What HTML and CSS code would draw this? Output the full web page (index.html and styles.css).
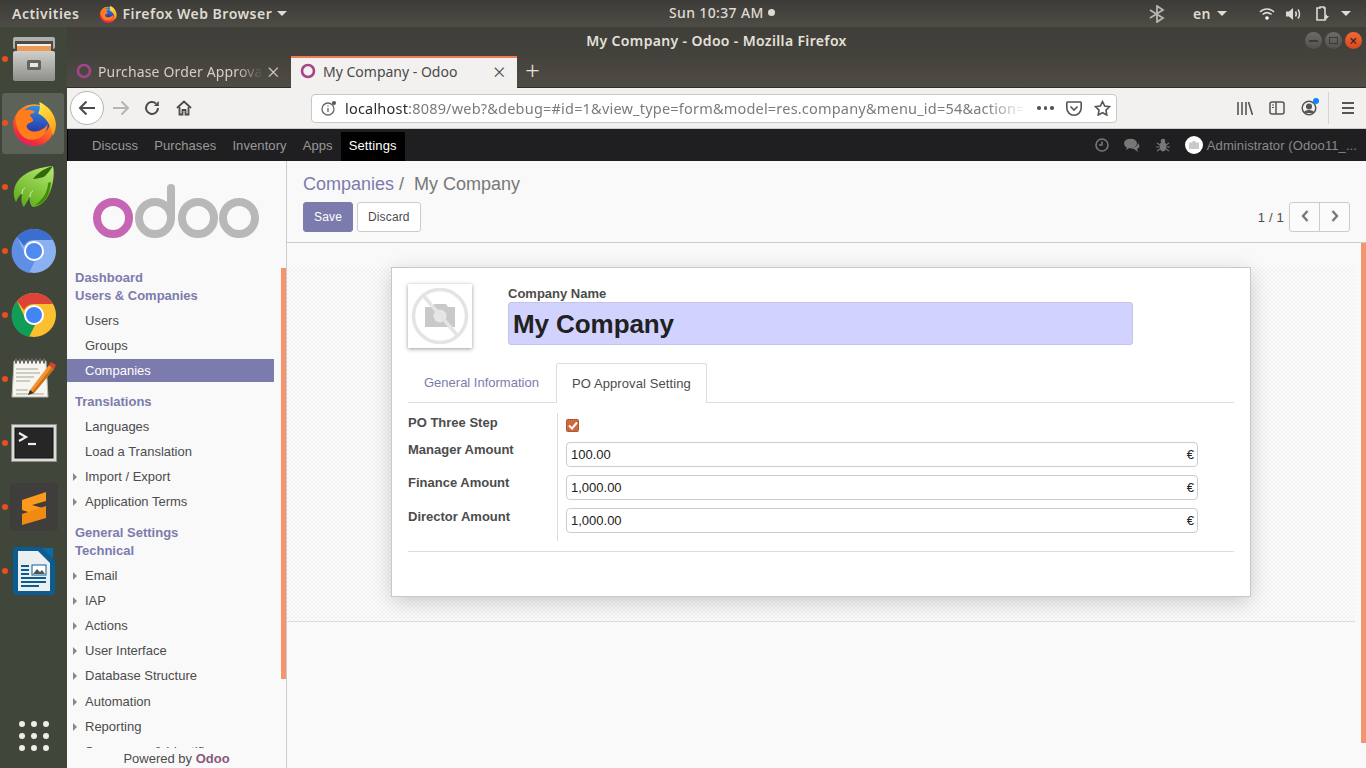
FILE: index.html
```html
<!DOCTYPE html>
<html lang="en">
<head>
    <meta charset="UTF-8">
    <title>My Company - Odoo - Mozilla Firefox</title>
    <link rel="stylesheet" href="styles.css">
</head>
<body>
    <svg class="defs" width="0" height="0">
        <defs>
            <linearGradient id="ff-base" x1="0.8" y1="0.1" x2="0.3" y2="1">
                <stop offset="0" stop-color="#ffb21f"/>
                <stop offset="0.5" stop-color="#ff6a1f"/>
                <stop offset="0.85" stop-color="#ee2a3c"/>
                <stop offset="1" stop-color="#d8207a"/>
            </linearGradient>
            <linearGradient id="ff-globe" x1="0.6" y1="0" x2="0.5" y2="1">
                <stop offset="0" stop-color="#2f8fe8"/>
                <stop offset="1" stop-color="#2b2a9c"/>
            </linearGradient>
            <linearGradient id="ff-flame" x1="0.3" y1="0" x2="0.6" y2="1">
                <stop offset="0" stop-color="#ffe94a"/>
                <stop offset="1" stop-color="#ff9d14"/>
            </linearGradient>
            <linearGradient id="files-body" x1="0" y1="0" x2="0" y2="1">
                <stop offset="0" stop-color="#cfcfcb"/>
                <stop offset="1" stop-color="#8e8e8a"/>
            </linearGradient>
            <linearGradient id="leaf" x1="0.8" y1="0" x2="0.3" y2="1">
                <stop offset="0" stop-color="#b4e46e"/>
                <stop offset="1" stop-color="#5cae18"/>
            </linearGradient>
            <symbol id="firefox" viewBox="0 0 44 44">
                <circle cx="22" cy="24" r="20" fill="url(#ff-base)"/>
                <circle cx="23" cy="20" r="14.500" fill="url(#ff-globe)"/>
                <path d="M5 15c3-5 6-8 10-9l-2 4c3-1 7-1 10 1-1 2-3 2-5 3 1 3 4 4 3 6-2 2-6 2-6 5 0 4 7 7 13 4 4-2 6-4 7-6 0 8-6 15-15 15C10 38 3 26 5 15z" fill="#ff7d1a"/>
                <path d="M27 2c7 3 15 10 16 21 0 4-1 8-3 11-2-10-6-17-14-21 2-4 2-8 1-11z" fill="url(#ff-flame)"/>
            </symbol>
            <symbol id="odoo-fav" viewBox="0 0 16 16">
                <circle cx="8" cy="8" r="6" fill="none" stroke="#a24689" stroke-width="2.6"/>
            </symbol>
        </defs>
    </svg>

    <header class="topbar">
        <span class="topbar-item activities">Activities</span>
        <span class="topbar-item app-menu">
            <svg width="18" height="18"><use href="#firefox"/></svg>
            Firefox Web Browser <i class="caret"></i>
        </span>
        <span class="clock">Sun 10:37 AM <i class="rec-dot"></i></span>
        <div class="tray">
            <svg class="tray-bt" width="16" height="18" viewBox="0 0 16 18" fill="none" stroke="#b8b6b0" stroke-width="1.8">
                <path d="M1 5l13 8-6 4V1l6 4L1 13"/>
            </svg>
            <span class="tray-lang">en <i class="caret"></i></span>
            <svg class="tray-wifi" width="16" height="14" viewBox="0 0 16 14" fill="none" stroke="#dcdad5" stroke-width="1.6">
                <path d="M1 5c4-4 10-4 14 0M3.500 7.500c3-2.500 6-2.500 9 0"/>
                <circle cx="8" cy="11" r="1.800" fill="#fff" stroke="none"/>
            </svg>
            <svg class="tray-vol" width="16" height="14" viewBox="0 0 16 14">
                <path d="M0 4.500h3L7 1v12L3 9.500H0z" fill="#dcdad5"/>
                <path d="M9.500 4.500c1 1.500 1 3.500 0 5M12 2.500c2 2.500 2 6.500 0 9" fill="none" stroke="#dcdad5" stroke-width="1.500"/>
            </svg>
            <svg class="tray-bat" width="14" height="16" viewBox="0 0 14 16">
                <path d="M3 2h1V1h4v1h1v12H1V2z" fill="none" stroke="#dcdad5" stroke-width="1.600"/>
                <path d="M11 8l-3 4h2l-1 3 4-5h-2z" fill="#dcdad5"/>
            </svg>
            <i class="caret"></i>
        </div>
    </header>

    <div class="desktop">
        <nav class="dock">
            <div class="dock-slot"><i class="dock-dot"></i>
                <svg width="44" height="46" viewBox="0 0 44 46">
                    <rect x="1" y="1" width="42" height="12" rx="2" fill="#b0b0ac"/>
                    <rect x="3" y="5" width="38" height="12" fill="#4d4b47"/>
                    <rect x="5" y="8" width="34" height="2" fill="#f3f0e8"/>
                    <rect x="5" y="10" width="34" height="6" fill="#ee9a57"/>
                    <rect x="1" y="15" width="42" height="30" rx="2" fill="url(#files-body)"/>
                    <rect x="15" y="24" width="14" height="10" rx="1.500" fill="#66645f"/>
                    <rect x="18" y="27" width="8" height="4" fill="#e8e8e4"/>
                </svg>
            </div>
            <div class="dock-slot active"><i class="dock-dot"></i>
                <svg width="46" height="46"><use href="#firefox"/></svg>
            </div>
            <div class="dock-slot"><i class="dock-dot"></i>
                <svg width="42" height="42" viewBox="0 0 42 42">
                    <path d="M40 0C28 1 10 5 3 18c-3 6-3 13 0 18 2-4 4-8 6-8-1 4-1 10 2 13 2-4 4-7 6-10-1 4 0 8 3 10C32 40 38 27 40 15c1-6 1-10 0-15z" fill="url(#leaf)"/>
                    <path d="M40 0C33 2 26 5 20 13c6-1 11-1 13-4 3-3 5-6 7-9z" fill="#2f6a0b"/>
                    <path d="M35 17c0 8-5 17-13 22 8 1 15-9 16-23z" fill="#3f8d05"/>
                    <path d="M9 28c0-4 2-6 3-6M17 31c0-4 2-6 3-6" stroke="#e2f5c0" fill="none"/>
                </svg>
            </div>
            <div class="dock-slot"><i class="dock-dot"></i>
                <svg width="46" height="46" viewBox="0 0 46 46">
                    <circle cx="23" cy="23" r="22" fill="#8ab2f2"/>
                    <path d="M23 1a22 22 0 0 1 19 11H23a11 11 0 0 0-10 6L6 9a22 22 0 0 1 17-8z" fill="#3a6fd0"/>
                    <path d="M6 9l9 19a10 10 0 0 0 9 5l-6 12A22 22 0 0 1 6 9z" fill="#5e8fe4"/>
                    <circle cx="23" cy="23" r="10" fill="#fff"/>
                    <circle cx="23" cy="23" r="8" fill="#4f8af0"/>
                </svg>
            </div>
            <div class="dock-slot"><i class="dock-dot"></i>
                <svg width="46" height="46" viewBox="0 0 46 46">
                    <circle cx="23" cy="23" r="22" fill="#fbc02d"/>
                    <path d="M23 1a22 22 0 0 1 19 11H23a11 11 0 0 0-10 6L6 9a22 22 0 0 1 17-8z" fill="#db4437"/>
                    <path d="M6 9l9 19a10 10 0 0 0 9 5l-6 12A22 22 0 0 1 6 9z" fill="#0f9d58"/>
                    <circle cx="23" cy="23" r="10" fill="#fff"/>
                    <circle cx="23" cy="23" r="8" fill="#4285f4"/>
                </svg>
            </div>
            <div class="dock-slot"><i class="dock-dot"></i>
                <svg width="46" height="42" viewBox="0 0 46 42">
                    <path d="M3 3h32l2 36H1z" fill="#f6f5ef" stroke="#b5b3a8"/>
                    <path d="M4 3h30" stroke="#666" stroke-width="5" stroke-dasharray="2 2"/>
                    <path d="M5 11h22M5 15h24M5 19h18M5 23h14M5 32h12M5 36h28" stroke="#a5a398"/>
                    <path d="M19 32L38 7l5 4-20 24-6 2z" fill="#f3932b"/>
                    <path d="M22 33L41 9l2 2-20 24z" fill="#c9701a"/>
                    <path d="M38 7l2-3 5 3-2 4z" fill="#d8442e"/>
                    <path d="M19 32l-2 5 6-2z" fill="#333"/>
                </svg>
            </div>
            <div class="dock-slot"><i class="dock-dot"></i>
                <svg width="46" height="38" viewBox="0 0 46 38">
                    <rect x="0.500" y="0.500" width="45" height="37" fill="#dadad6" stroke="#8f8f8b"/>
                    <rect x="4" y="4" width="38" height="30" fill="#262626" stroke="#111"/>
                    <path d="M8 9l7 4-7 4" fill="none" stroke="#eee" stroke-width="2.200"/>
                    <path d="M17 20h8" stroke="#eee" stroke-width="2.200"/>
                </svg>
            </div>
            <div class="dock-slot"><i class="dock-dot"></i>
                <svg width="48" height="48" viewBox="0 0 48 48">
                    <rect width="48" height="48" rx="4" fill="#3f3e3c"/>
                    <path d="M36 9L12 17v10l24 8v-9l-14-4 14-4z" fill="#fb9a1c"/>
                    <path d="M12 31l24-8v12l-24 7z" fill="#f08a12"/>
                </svg>
            </div>
            <div class="dock-slot"><i class="dock-dot"></i>
                <svg width="42" height="48" viewBox="0 0 42 48">
                    <path d="M3 0h25l14 14v31a3 3 0 0 1-3 3H3a3 3 0 0 1-3-3V3a3 3 0 0 1 3-3z" fill="#0b5d8f"/>
                    <path d="M5 4h20l12 12v28H5z" fill="#eceff0"/>
                    <path d="M29 1h11v11z" fill="#0b6aa8"/>
                    <path d="M8 19h8M8 23h8M8 27h8M8 31h25M8 35h25M8 39h18" stroke="#0b5d8f" stroke-width="2"/>
                    <rect x="19" y="18" width="14" height="10" fill="#fff" stroke="#0b5d8f"/>
                    <path d="M20 27l4-5 3 3 2-2 3 4z" fill="#555"/>
                </svg>
            </div>
            <div class="dock-grid">
                <i></i><i></i><i></i><i></i><i></i><i></i><i></i><i></i><i></i>
            </div>
        </nav>

        <div class="window">
            <div class="titlebar">
                <span class="title-text">My Company - Odoo - Mozilla Firefox</span>
                <div class="win-btns">
                    <span class="win-btn"><i class="win-min"></i></span>
                    <span class="win-btn"><i class="win-max"></i></span>
                    <span class="win-btn close">×</span>
                </div>
            </div>

            <div class="tabstrip">
                <div class="tab">
                    <svg width="16" height="16"><use href="#odoo-fav"/></svg>
                    <span class="tab-label fade">Purchase Order Approval</span>
                    <span class="tab-x">×</span>
                </div>
                <div class="tab current">
                    <svg width="16" height="16"><use href="#odoo-fav"/></svg>
                    <span class="tab-label">My Company - Odoo</span>
                    <span class="tab-x">×</span>
                </div>
                <span class="tab-new">+</span>
            </div>

            <div class="navbar">
                <span class="nav-back">
                    <svg width="18" height="16" viewBox="0 0 18 16" fill="none" stroke="#4a4a4a" stroke-width="2"><path d="M17 8H2M8.500 1.500L2 8l6.500 6.500"/></svg>
                </span>
                <svg class="nav-fwd" width="18" height="16" viewBox="0 0 18 16" fill="none" stroke="#b5b5b3" stroke-width="2"><path d="M1 8h15M9.500 1.500L16 8l-6.500 6.500"/></svg>
                <svg class="nav-reload" width="16" height="16" viewBox="0 0 16 16" fill="none" stroke="#4a4a4a" stroke-width="2"><path d="M14 8a6 6 0 1 1-2-4.500"/><path d="M14.800 1v5h-5z" fill="#4a4a4a" stroke="none"/></svg>
                <svg class="nav-home" width="16" height="16" viewBox="0 0 16 16" fill="none" stroke="#4a4a4a" stroke-width="1.800"><path d="M1 8l7-6.500L15 8"/><path d="M3.500 7v7.500h3V10h3v4.500h3V7"/></svg>

                <div class="urlbar">
                    <svg class="url-info" width="16" height="16" viewBox="0 0 16 16" fill="none" stroke="#666" stroke-width="1.300">
                        <circle cx="7" cy="9" r="6"/><path d="M7 8v4M7 5.500v1"/><circle cx="13" cy="3" r="2" fill="#555" stroke="none"/>
                    </svg>
                    <span class="url-text"><b>localhost</b>:8089/web?&amp;debug=#id=1&amp;view_type=form&amp;model=res.company&amp;menu_id=54&amp;action=</span>
                    <span class="url-dots"><i></i><i></i><i></i></span>
                    <svg class="url-pocket" width="16" height="15" viewBox="0 0 16 15" fill="none" stroke="#555" stroke-width="1.600">
                        <path d="M1.500 1h13a.7.7 0 0 1 .7.7V7a7.200 7.200 0 0 1-14.400 0V1.700a.7.7 0 0 1 .7-.7z"/><path d="M4.500 5.500L8 9l3.500-3.500"/>
                    </svg>
                    <svg class="url-star" width="17" height="16" viewBox="0 0 17 16" fill="none" stroke="#555" stroke-width="1.600">
                        <path d="M8.500 1.500l2.200 4.500 4.800.7-3.500 3.400.8 4.900-4.300-2.300L4.200 15l.8-4.900L1.500 6.700l4.800-.7z"/>
                    </svg>
                </div>

                <svg class="nav-lib" width="16" height="14" viewBox="0 0 16 14" stroke="#555" stroke-width="1.600"><path d="M1 1v13M5 1v13M9 1v13M11.500 1l4 13"/></svg>
                <svg class="nav-side" width="16" height="14" viewBox="0 0 16 14" fill="none" stroke="#555" stroke-width="1.500"><rect x="1" y="1" width="14" height="12" rx="2"/><path d="M7 1v12"/><path d="M3 4h2M3 6.500h2" stroke-width="1.200"/></svg>
                <span class="nav-account">
                    <svg width="16" height="16" viewBox="0 0 16 16" fill="none" stroke="#555" stroke-width="1.500"><circle cx="8" cy="8" r="6.800"/><circle cx="8" cy="6.500" r="2.300" fill="#555"/><path d="M3.500 13c1-3 8-3 9 0" fill="#555"/></svg>
                    <i class="account-dot"></i>
                </span>
                <i class="nav-sep"></i>
                <span class="nav-menu"><i></i><i></i><i></i></span>
            </div>

            <div class="odoo-nav">
                <ul class="odoo-apps">
                    <li>Discuss</li>
                    <li>Purchases</li>
                    <li>Inventory</li>
                    <li>Apps</li>
                    <li class="active">Settings</li>
                </ul>
                <div class="odoo-user">
                    <svg class="sys-clock" width="14" height="14" viewBox="0 0 14 14" fill="none" stroke="#777" stroke-width="1.600"><circle cx="7" cy="7" r="6"/><path d="M7 3.500V7H4"/></svg>
                    <svg class="sys-chat" width="16" height="14" viewBox="0 0 16 14" fill="#777"><ellipse cx="6.500" cy="5.500" rx="6.500" ry="4.800"/><path d="M3 8l-1 4 4-2.500zM14 5c2 2 2 5-1 6l1 3-4-3c-2 0-3-1-3-1 3 0 7-2 7-5z"/></svg>
                    <svg class="sys-bug" width="14" height="14" viewBox="0 0 14 14" fill="#777"><ellipse cx="7" cy="8.500" rx="3.500" ry="5"/><circle cx="7" cy="3" r="2.300"/><path d="M1 5l3 2M13 5l-3 2M0 9h3M14 9h-3M1 13l3-2M13 13l-3-2" stroke="#777" stroke-width="1.200"/></svg>
                    <span class="avatar">
                        <svg width="10" height="8" viewBox="0 0 10 8" fill="#c9c9c9"><path d="M0 1.500h3L4 0h2l1 1.500h3V8H0z"/></svg>
                    </span>
                    <span class="user-name">Administrator (Odoo11_...</span>
                </div>
            </div>

            <div class="odoo-main">
                <aside class="sidebar">
                    <svg class="logo" width="170" height="60" viewBox="0 0 170 60" fill="none" stroke-width="8">
                        <circle cx="20" cy="37" r="16" stroke="#c565b4"/>
                        <circle cx="62" cy="37" r="16" stroke="#b8b8b8"/>
                        <path d="M78 37V7" stroke="#b8b8b8" stroke-linecap="round"/>
                        <circle cx="105" cy="37" r="16" stroke="#b8b8b8"/>
                        <circle cx="146" cy="37" r="16" stroke="#b8b8b8"/>
                    </svg>
                    <div class="menu">
                        <div class="menu-head">Dashboard</div>
                        <div class="menu-head">Users &amp; Companies</div>
                        <div class="menu-item tight">Users</div>
                        <div class="menu-item">Groups</div>
                        <div class="menu-item active">Companies</div>
                        <div class="menu-head spaced">Translations</div>
                        <div class="menu-item tight">Languages</div>
                        <div class="menu-item">Load a Translation</div>
                        <div class="menu-item sub">Import / Export</div>
                        <div class="menu-item sub">Application Terms</div>
                        <div class="menu-head spaced">General Settings</div>
                        <div class="menu-head">Technical</div>
                        <div class="menu-item sub">Email</div>
                        <div class="menu-item sub">IAP</div>
                        <div class="menu-item sub">Actions</div>
                        <div class="menu-item sub">User Interface</div>
                        <div class="menu-item sub">Database Structure</div>
                        <div class="menu-item sub">Automation</div>
                        <div class="menu-item sub">Reporting</div>
                        <div class="menu-item sub">Sequences &amp; Identifiers</div>
                    </div>
                    <div class="powered">Powered by <b>Odoo</b></div>
                    <i class="side-scroll"></i>
                </aside>

                <main class="content">
                    <div class="control-panel">
                        <div class="breadcrumb"><a>Companies</a><span class="crumb-sep">/</span>My Company</div>
                        <div class="cp-row">
                            <div class="cp-buttons">
                                <button class="btn primary">Save</button>
                                <button class="btn">Discard</button>
                            </div>
                            <div class="pager">
                                <span class="pager-value">1 / 1</span>
                                <div class="pager-btns">
                                    <button class="pager-btn">
                                        <svg width="8" height="12" viewBox="0 0 8 12" fill="none" stroke="#777" stroke-width="2.400"><path d="M6.500 1L2 6l4.500 5"/></svg>
                                    </button>
                                    <button class="pager-btn">
                                        <svg width="8" height="12" viewBox="0 0 8 12" fill="none" stroke="#777" stroke-width="2.400"><path d="M1.500 1L6 6l-4.500 5"/></svg>
                                    </button>
                                </div>
                            </div>
                        </div>
                    </div>

                    <div class="form-area">
                        <div class="sheet-bg">
                            <div class="sheet">
                                <div class="sheet-head">
                                    <div class="company-img">
                                        <svg width="58" height="58" viewBox="0 0 58 58" fill="none">
                                            <path d="M14 20h7l2-3h12l2 3h7v20H14z" fill="#c9c9c9"/>
                                            <circle cx="29" cy="29" r="6.500" fill="#e6e6e6"/>
                                            <circle cx="29" cy="29" r="26.500" stroke="#e4e4e4" stroke-width="3.500"/>
                                            <path d="M11 7l35 41" stroke="#e4e4e4" stroke-width="3.500"/>
                                        </svg>
                                    </div>
                                    <div class="title-field">
                                        <label class="name-label">Company Name</label>
                                        <div class="name-input">My Company</div>
                                    </div>
                                </div>

                                <div class="form-tabs">
                                    <span class="form-tab">General Information</span>
                                    <span class="form-tab current">PO Approval Setting</span>
                                </div>

                                <div class="form-grid">
                                    <div class="form-labels">
                                        <label class="lbl-step">PO Three Step</label>
                                        <label class="lbl-manager">Manager Amount</label>
                                        <label class="lbl-finance">Finance Amount</label>
                                        <label class="lbl-director">Director Amount</label>
                                    </div>
                                    <div class="form-values">
                                        <span class="check">
                                            <svg width="10" height="9" viewBox="0 0 10 9" fill="none" stroke="#fff" stroke-width="2"><path d="M1 4.500l3 3 5-6"/></svg>
                                        </span>
                                        <div class="amount"><span>100.00</span><span>€</span></div>
                                        <div class="amount"><span>1,000.00</span><span>€</span></div>
                                        <div class="amount"><span>1,000.00</span><span>€</span></div>
                                    </div>
                                </div>
                                <div class="sheet-foot"></div>
                            </div>
                        </div>
                        <i class="main-scroll"></i>
                    </div>
                </main>
            </div>
        </div>
    </div>
</body>
</html>
```

FILE: styles.css
```css
* {
    box-sizing: border-box;
}
html, body {
    margin: 0;
    height: 100%;
    overflow: hidden;
}
body {
    width: 1366px;
    height: 768px;
    font-family: "Liberation Sans", Arial, sans-serif;
    font-size: 13px;
    color: #4c4c4c;
    background: #f9f9f9;
}
i {
    font-style: normal;
}
.defs {
    position: absolute;
}

/* ubuntu top bar */
.topbar {
    height: 27px;
    display: flex;
    align-items: center;
    position: relative;
    background: linear-gradient(#3c3b37, #4f4c46);
    font-family: "Noto Sans", sans-serif;
    font-size: 14px;
    font-weight: 600;
    letter-spacing: 0.5px;
    color: #dfdbd2;
}
.activities {
    margin-left: 12px;
}
.app-menu {
    margin-left: 20px;
    display: flex;
    align-items: center;
    gap: 5px;
}
.caret {
    display: inline-block;
    width: 0;
    height: 0;
    border-left: 5px solid transparent;
    border-right: 5px solid transparent;
    border-top: 5px solid #dfdbd2;
}
.clock {
    position: absolute;
    left: 669px;
    top: 3px;
    display: flex;
    align-items: center;
    gap: 4px;
    font-weight: 500;
    letter-spacing: 0.35px;
}
.rec-dot {
    width: 7px;
    height: 7px;
    border-radius: 50%;
    background: #dfdbd2;
}
.tray {
    margin-left: auto;
    display: flex;
    align-items: center;
    padding-right: 15px;
}
.tray-bt {
    margin-right: 28px;
}
.tray-lang {
    margin-right: 32px;
    display: flex;
    align-items: center;
    gap: 6px;
}
.tray-wifi {
    margin-right: 11px;
}
.tray-vol {
    margin-right: 14px;
}
.tray-bat {
    margin-right: 11px;
}

/* dock */
.desktop {
    display: flex;
    height: 741px;
}
.dock {
    width: 67px;
    flex: none;
    display: flex;
    flex-direction: column;
    background: #40463a;
}
.dock-slot {
    height: 64px;
    flex: none;
    position: relative;
    display: flex;
    align-items: center;
    justify-content: center;
}
.dock-slot svg {
    position: relative;
}
.dock-slot.active::before {
    content: "";
    position: absolute;
    left: 2px;
    right: 3px;
    top: 2px;
    bottom: 1px;
    border-radius: 3px;
    background: #5c6257;
}
.dock-dot {
    position: absolute;
    left: 2px;
    top: 29px;
    width: 6px;
    height: 6px;
    border-radius: 50%;
    background: #e8501f;
}
.dock-grid {
    margin: auto auto 17px;
    display: grid;
    grid-template-columns: repeat(3, 6px);
    gap: 6px;
}
.dock-grid i {
    width: 6px;
    height: 6px;
    border-radius: 50%;
    background: #ecece8;
}

/* firefox window */
.window {
    flex: 1;
    min-width: 0;
    display: flex;
    flex-direction: column;
}
.titlebar {
    height: 29px;
    flex: none;
    display: flex;
    align-items: center;
    justify-content: center;
    position: relative;
    padding-bottom: 2px;
    background: linear-gradient(#3f3e39, #44423c);
    font-family: "Noto Sans", sans-serif;
    font-size: 14px;
    font-weight: 600;
    letter-spacing: 0.35px;
    color: #e4e1da;
}
.win-btns {
    position: absolute;
    right: 4px;
    top: 5px;
    display: flex;
    gap: 3px;
}
.win-btn {
    width: 17px;
    height: 17px;
    border-radius: 50%;
    background: linear-gradient(#6d6b65, #53514b);
    display: flex;
    align-items: center;
    justify-content: center;
    color: #3a2a20;
    font-size: 14px;
    line-height: 1;
}
.win-btn.close {
    background: linear-gradient(#f0693a, #d9481c);
}
.win-min {
    width: 9px;
    height: 2px;
    background: #3c3b37;
}
.win-max {
    width: 9px;
    height: 7px;
    border: 1.5px solid #3c3b37;
}

.tabstrip {
    height: 32px;
    flex: none;
    display: flex;
    align-items: stretch;
    background: linear-gradient(#44423c, #4f4c45);
    border-bottom: 1px solid #2e2d2a;
    font-family: "Noto Sans", sans-serif;
    font-size: 14px;
}
.tab {
    width: 224px;
    display: flex;
    align-items: center;
    padding: 0 0 1px 9px;
    color: #d3d0c8;
}
.tab svg {
    flex: none;
}
.tab-label {
    margin-left: 6px;
    width: 165px;
    overflow: hidden;
    white-space: nowrap;
}
.tab-label.fade {
    letter-spacing: 0.15px;
    -webkit-mask-image: linear-gradient(to right, #000 84%, transparent);
    mask-image: linear-gradient(to right, #000 84%, transparent);
}
.tab-x {
    margin-left: 4px;
    font-size: 22px;
    font-weight: 300;
    line-height: 1;
}
.tab.current {
    width: 226px;
    background: #f2f1f0;
    border-top: 2px solid #ec7d54;
    margin-bottom: -1px;
    color: #4a4a48;
    padding: 0 0 4px 9px;
}
.tab.current .tab-label {
    width: 168px;
    margin-left: 7px;
}
.tab.current .tab-x {
    margin-left: 2px;
}
.tab-new {
    margin-left: 8px;
    font-size: 26px;
    font-weight: 300;
    line-height: 29px;
    color: #e4e1da;
}

.navbar {
    height: 41px;
    flex: none;
    display: flex;
    align-items: center;
    background: #f2f1f0;
    border-bottom: 1px solid #cfcdc9;
    font-family: "Noto Sans", sans-serif;
}
.nav-back {
    width: 34px;
    height: 34px;
    margin-left: 3px;
    flex: none;
    display: flex;
    align-items: center;
    justify-content: center;
    border: 1px solid #b5b5b3;
    border-radius: 50%;
    background: #fff;
}
.nav-fwd {
    margin-left: 8px;
}
.nav-reload {
    margin-left: 14px;
}
.nav-home {
    margin-left: 16px;
}
.urlbar {
    width: 806px;
    height: 29px;
    margin-left: 119px;
    display: flex;
    align-items: center;
    background: #fff;
    border: 1px solid #c9c8c5;
    border-radius: 4px;
    font-size: 14.5px;
    letter-spacing: 0.2px;
    color: #7b7b7b;
}
.url-info {
    margin-left: 9px;
    flex: none;
}
.url-text {
    margin-left: 8px;
    width: 689px;
    flex: none;
    overflow: hidden;
    white-space: nowrap;
    -webkit-mask-image: linear-gradient(to right, #000 93%, transparent 99%);
    mask-image: linear-gradient(to right, #000 93%, transparent 99%);
}
.url-text b {
    font-weight: 400;
    color: #2b2b2b;
}
.url-dots {
    margin-left: 3px;
    display: flex;
    gap: 3px;
}
.url-dots i {
    width: 3.5px;
    height: 3.5px;
    border-radius: 50%;
    background: #555;
}
.url-pocket {
    margin-left: 12px;
}
.url-star {
    margin-left: 12px;
}
.nav-lib {
    margin-left: 120px;
}
.nav-side {
    margin-left: 16px;
}
.nav-account {
    margin-left: 16px;
    position: relative;
    display: flex;
}
.account-dot {
    position: absolute;
    right: -2px;
    top: -2px;
    width: 6px;
    height: 6px;
    border-radius: 50%;
    background: #0a84ff;
}
.nav-sep {
    margin-left: 11px;
    width: 1px;
    height: 32px;
    background: #d6d5d2;
}
.nav-menu {
    margin-left: 13px;
    display: flex;
    flex-direction: column;
    gap: 3px;
}
.nav-menu i {
    width: 12px;
    height: 2px;
    background: #555;
}

/* odoo */
.odoo-nav {
    height: 32px;
    flex: none;
    display: flex;
    justify-content: space-between;
    background: #1f1f21;
    border-left: 1px solid #000;
    color: #999;
}
.odoo-apps {
    list-style: none;
    margin: 0 0 0 16px;
    padding: 0;
    display: flex;
}
.odoo-apps li {
    padding: 0 8px;
    line-height: 33px;
    letter-spacing: 0.09px;
}
.odoo-apps li.active {
    height: 29px;
    margin-top: 3px;
    line-height: 27px;
    letter-spacing: 0.12px;
    background: #000;
    color: #fff;
}
.odoo-user {
    display: flex;
    align-items: center;
    padding-right: 9px;
}
.sys-chat {
    margin-left: 15px;
}
.sys-bug {
    margin-left: 16px;
}
.avatar {
    width: 18px;
    height: 18px;
    margin-left: 15px;
    border-radius: 50%;
    background: #fff;
    display: flex;
    align-items: center;
    justify-content: center;
}
.user-name {
    margin-left: 4px;
    color: #8a8a8a;
    white-space: nowrap;
    letter-spacing: 0.09px;
}

.odoo-main {
    flex: 1;
    min-height: 0;
    display: flex;
}
.sidebar {
    width: 220px;
    flex: none;
    position: relative;
    display: flex;
    flex-direction: column;
    background: #f9f9f9;
    border-right: 1px solid #ccc;
}
.logo {
    flex: none;
    margin: 20px 0 0 26px;
}
.menu {
    flex: 1;
    min-height: 0;
    overflow: hidden;
    margin-top: 28px;
    display: flex;
    flex-direction: column;
}
.menu-head {
    flex: none;
    padding-left: 8px;
    height: 18px;
    line-height: 18px;
    font-weight: 700;
    color: #7c7bad;
}
.menu-head.spaced {
    margin-top: 9.5px;
}
.menu-item {
    flex: none;
    height: 25.1px;
    line-height: 25px;
    padding-left: 18px;
    margin-right: 12px;
    position: relative;
    color: #4c4c4c;
}
.menu-head + .menu-item {
    margin-top: 3.5px;
}
.menu-head + .menu-item.tight {
    margin-top: 2.5px;
}
.menu-item.active {
    height: 23px;
    line-height: 23px;
    margin-top: 1px;
    margin-bottom: 2px;
    background: #7c7bad;
    color: #fff;
}
.menu-item.sub::before {
    content: "";
    position: absolute;
    left: 6px;
    top: 9px;
    border-top: 4px solid transparent;
    border-bottom: 4px solid transparent;
    border-left: 4px solid #888;
}
.powered {
    height: 20px;
    flex: none;
    text-align: center;
    line-height: 21px;
    background: #f9f9f9;
}
.powered b {
    color: #875a7b;
}
.side-scroll {
    position: absolute;
    right: 0;
    top: 107px;
    width: 5px;
    height: 411px;
    background: #f3956e;
}

.content {
    flex: 1;
    min-width: 0;
    display: flex;
    flex-direction: column;
}
.control-panel {
    height: 82px;
    flex: none;
    padding: 11px 16px 0;
    background: #f9f9f9;
    border-bottom: 1px solid #ccc;
}
.breadcrumb {
    font-size: 18px;
    line-height: 24px;
    color: #777;
}
.breadcrumb a {
    color: #7c7bad;
}
.crumb-sep {
    margin: 0 10px 0 5px;
    color: #777;
}
.cp-row {
    display: flex;
    justify-content: space-between;
    margin-top: 6px;
}
.cp-buttons {
    display: flex;
    gap: 4px;
}
.btn {
    height: 30px;
    padding: 0 10px;
    font: 12px "Liberation Sans", Arial, sans-serif;
    letter-spacing: 0.15px;
    color: #4c4c4c;
    background: #fff;
    border: 1px solid #ccc;
    border-radius: 3px;
}
.btn.primary {
    background: #7c7bad;
    border-color: #7c7bad;
    color: #fff;
}
.pager {
    display: flex;
    align-items: center;
}
.pager-value {
    margin-right: 5px;
    letter-spacing: 0.2px;
}
.pager-btns {
    display: flex;
    border: 1px solid #ccc;
    border-radius: 3px;
    background: #fbfbfb;
    height: 30px;
}
.pager-btn {
    width: 29px;
    padding: 0;
    background: none;
    border: none;
}
.pager-btn + .pager-btn {
    width: 30px;
    border-left: 1px solid #ccc;
}

.form-area {
    flex: 1;
    position: relative;
    padding-top: 24px;
    background: #f9f9f9;
}
.main-scroll {
    position: absolute;
    right: 0;
    top: 0;
    width: 5px;
    height: 500px;
    background: #f3956e;
}
.sheet-bg {
    margin-right: 11px;
    height: 355px;
    display: flex;
    justify-content: center;
    align-items: flex-start;
    border-bottom: 1px solid #ddd;
    background: repeating-conic-gradient(#f2f2f2 0 25%, #fcfcfc 0 50%) 0 0 / 4px 4px;
}
.sheet {
    width: 860px;
    height: 330px;
    padding: 16px;
    background: #fff;
    border: 1px solid #c8c8cc;
    box-shadow: 0 5px 20px -1px rgba(0, 0, 0, 0.2);
}
.sheet-head {
    display: flex;
}
.company-img {
    width: 64px;
    height: 64px;
    flex: none;
    display: flex;
    align-items: center;
    justify-content: center;
    background: #fff;
    box-shadow: 0 1px 4px rgba(0, 0, 0, 0.4);
}
.title-field {
    margin-left: 36px;
    padding-top: 2px;
}
.name-label {
    display: block;
    font-weight: 700;
    line-height: 16px;
}
.name-input {
    width: 625px;
    height: 43px;
    padding-left: 4px;
    font-size: 26px;
    font-weight: 700;
    letter-spacing: -0.08px;
    line-height: 43px;
    color: #212121;
    background: #d2d2ff;
    border: 1px solid #c4c4e8;
    border-radius: 3px;
}
.form-tabs {
    display: flex;
    height: 40px;
    margin-top: 15px;
    border-bottom: 1px solid #ddd;
}
.form-tab {
    padding: 0 16px;
    line-height: 40px;
    color: #7c7bad;
}
.form-tab.current {
    margin-left: 1px;
    width: 151px;
    height: 40px;
    padding: 0 15px;
    letter-spacing: 0.1px;
    white-space: nowrap;
    background: #fff;
    border: 1px solid #ddd;
    border-bottom: none;
    border-radius: 3px 3px 0 0;
    color: #4c4c4c;
}
.form-grid {
    display: flex;
    height: 128px;
    margin-top: 10px;
}
.form-labels {
    width: 150px;
    flex: none;
    border-right: 1px solid #ddd;
    display: flex;
    flex-direction: column;
    font-weight: 700;
    color: #4c4c4c;
}
.lbl-step {
    margin-top: 2px;
}
.lbl-manager {
    margin-top: 12px;
}
.lbl-finance {
    margin-top: 18px;
}
.lbl-director {
    margin-top: 19px;
}
.form-values {
    padding: 6px 0 0 8px;
    display: flex;
    flex-direction: column;
    align-items: flex-start;
}
.check {
    width: 13px;
    height: 13px;
    display: flex;
    align-items: center;
    justify-content: center;
    background: #d0673f;
    border: 1px dotted #8a4a30;
    border-radius: 2px;
}
.amount {
    width: 632px;
    height: 25.5px;
    margin-bottom: 8px;
    padding: 0 3px 0 4px;
    display: flex;
    align-items: center;
    justify-content: space-between;
    color: #212121;
    background: #fff;
    border: 1px solid #ccc;
    border-radius: 4px;
}
.amount:last-child {
    margin-top: 0.5px;
}
.check + .amount {
    margin-top: 10px;
}
.sheet-foot {
    margin-top: 10px;
    border-top: 1px solid #ddd;
}
```
